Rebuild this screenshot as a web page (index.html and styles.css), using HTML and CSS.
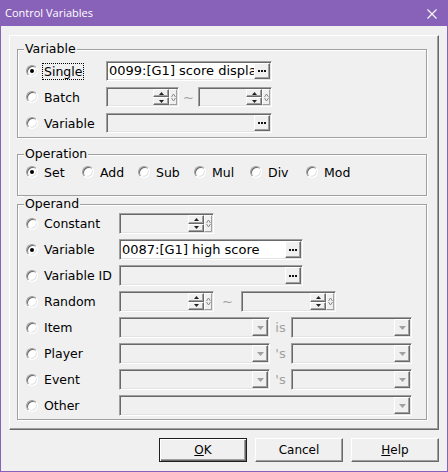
FILE: index.html
```html
<!DOCTYPE html>
<html>
<head>
<meta charset="utf-8">
<link rel="stylesheet" href="styles.css">
</head>
<body>
<div class="window">
  <div class="titlebar">
    <span class="title">Control Variables</span>
    <svg class="close" width="10" height="10" viewBox="0 0 10 10"><path d="M0.5 0.5L9.5 9.5M9.5 0.5L0.5 9.5" stroke="#fff" stroke-width="1.1" fill="none"/></svg>
  </div>
  <div class="client">
    <div class="panel">

      <div class="group g-var">
        <span class="legend">Variable</span>
        <div class="rows">
          <div class="row">
            <div class="lab"><span class="radio on"></span><span class="lt focus">Single</span></div>
            <div class="field on w166"><span class="txt">0099:[G1] score display</span><span class="raised ell"><svg width="8" height="2" viewBox="0 0 8 2"><rect x="0" y="0" width="2" height="2" fill="#111"/><rect x="3" y="0" width="2" height="2" fill="#111"/><rect x="6" y="0" width="2" height="2" fill="#111"/></svg></span></div>
          </div>
          <div class="row">
            <div class="lab"><span class="radio"></span><span class="lt">Batch</span></div>
            <div class="field spin w73"><span class="txt"></span><span class="spinbtns"><span class="raised sb"><svg width="5" height="3" viewBox="0 0 5 3"><path d="M2.5 0L5 3H0Z" fill="#222"/></svg></span><span class="raised sb"><svg width="5" height="3" viewBox="0 0 5 3"><path d="M0 0H5L2.5 3Z" fill="#222"/></svg></span></span><span class="raised knob"><svg width="5" height="9" viewBox="0 0 5 9"><path d="M0.5 4L2.5 1L4.5 4M0.5 5L2.5 8L4.5 5" stroke="#8a8a8a" fill="none"/></svg></span></div>
            <span class="sep w19">~</span>
            <div class="field spin w74"><span class="txt"></span><span class="spinbtns"><span class="raised sb"><svg width="5" height="3" viewBox="0 0 5 3"><path d="M2.5 0L5 3H0Z" fill="#222"/></svg></span><span class="raised sb"><svg width="5" height="3" viewBox="0 0 5 3"><path d="M0 0H5L2.5 3Z" fill="#222"/></svg></span></span><span class="raised knob"><svg width="5" height="9" viewBox="0 0 5 9"><path d="M0.5 4L2.5 1L4.5 4M0.5 5L2.5 8L4.5 5" stroke="#8a8a8a" fill="none"/></svg></span></div>
          </div>
          <div class="row">
            <div class="lab"><span class="radio"></span><span class="lt">Variable</span></div>
            <div class="field w166"><span class="txt"></span><span class="raised ell"><svg width="8" height="2" viewBox="0 0 8 2"><rect x="0" y="0" width="2" height="2" fill="#111"/><rect x="3" y="0" width="2" height="2" fill="#111"/><rect x="6" y="0" width="2" height="2" fill="#111"/></svg></span></div>
          </div>
        </div>
      </div>

      <div class="group g-op">
        <span class="legend">Operation</span>
        <div class="op-row">
          <div class="opt"><span class="radio on"></span><span class="lt">Set</span></div>
          <div class="opt"><span class="radio"></span><span class="lt">Add</span></div>
          <div class="opt"><span class="radio"></span><span class="lt">Sub</span></div>
          <div class="opt"><span class="radio"></span><span class="lt">Mul</span></div>
          <div class="opt"><span class="radio"></span><span class="lt">Div</span></div>
          <div class="opt"><span class="radio"></span><span class="lt">Mod</span></div>
        </div>
      </div>

      <div class="group g-opd">
        <span class="legend">Operand</span>
        <div class="rows">
          <div class="row">
            <div class="lab"><span class="radio"></span><span class="lt">Constant</span></div>
            <div class="field spin w95"><span class="txt"></span><span class="spinbtns"><span class="raised sb"><svg width="5" height="3" viewBox="0 0 5 3"><path d="M2.5 0L5 3H0Z" fill="#222"/></svg></span><span class="raised sb"><svg width="5" height="3" viewBox="0 0 5 3"><path d="M0 0H5L2.5 3Z" fill="#222"/></svg></span></span><span class="raised knob"><svg width="5" height="9" viewBox="0 0 5 9"><path d="M0.5 4L2.5 1L4.5 4M0.5 5L2.5 8L4.5 5" stroke="#8a8a8a" fill="none"/></svg></span></div>
          </div>
          <div class="row">
            <div class="lab"><span class="radio on"></span><span class="lt">Variable</span></div>
            <div class="field on w184"><span class="txt">0087:[G1] high score</span><span class="raised ell"><svg width="8" height="2" viewBox="0 0 8 2"><rect x="0" y="0" width="2" height="2" fill="#111"/><rect x="3" y="0" width="2" height="2" fill="#111"/><rect x="6" y="0" width="2" height="2" fill="#111"/></svg></span></div>
          </div>
          <div class="row">
            <div class="lab"><span class="radio"></span><span class="lt">Variable ID</span></div>
            <div class="field w184"><span class="txt"></span><span class="raised ell"><svg width="8" height="2" viewBox="0 0 8 2"><rect x="0" y="0" width="2" height="2" fill="#111"/><rect x="3" y="0" width="2" height="2" fill="#111"/><rect x="6" y="0" width="2" height="2" fill="#111"/></svg></span></div>
          </div>
          <div class="row">
            <div class="lab"><span class="radio"></span><span class="lt">Random</span></div>
            <div class="field spin w95"><span class="txt"></span><span class="spinbtns"><span class="raised sb"><svg width="5" height="3" viewBox="0 0 5 3"><path d="M2.5 0L5 3H0Z" fill="#222"/></svg></span><span class="raised sb"><svg width="5" height="3" viewBox="0 0 5 3"><path d="M0 0H5L2.5 3Z" fill="#222"/></svg></span></span><span class="raised knob"><svg width="5" height="9" viewBox="0 0 5 9"><path d="M0.5 4L2.5 1L4.5 4M0.5 5L2.5 8L4.5 5" stroke="#8a8a8a" fill="none"/></svg></span></div>
            <span class="sep w27">~</span>
            <div class="field spin w95"><span class="txt"></span><span class="spinbtns"><span class="raised sb"><svg width="5" height="3" viewBox="0 0 5 3"><path d="M2.5 0L5 3H0Z" fill="#222"/></svg></span><span class="raised sb"><svg width="5" height="3" viewBox="0 0 5 3"><path d="M0 0H5L2.5 3Z" fill="#222"/></svg></span></span><span class="raised knob"><svg width="5" height="9" viewBox="0 0 5 9"><path d="M0.5 4L2.5 1L4.5 4M0.5 5L2.5 8L4.5 5" stroke="#8a8a8a" fill="none"/></svg></span></div>
          </div>
          <div class="row">
            <div class="lab"><span class="radio"></span><span class="lt">Item</span></div>
            <div class="field w151"><span class="txt"></span><span class="raised drop"><svg width="7" height="4" viewBox="0 0 7 4"><path d="M0 0H7L3.5 4Z" fill="#a0a0a0"/></svg></span></div>
            <span class="sep w21">is</span>
            <div class="field w121"><span class="txt"></span><span class="raised drop"><svg width="7" height="4" viewBox="0 0 7 4"><path d="M0 0H7L3.5 4Z" fill="#a0a0a0"/></svg></span></div>
          </div>
          <div class="row">
            <div class="lab"><span class="radio"></span><span class="lt">Player</span></div>
            <div class="field w151"><span class="txt"></span><span class="raised drop"><svg width="7" height="4" viewBox="0 0 7 4"><path d="M0 0H7L3.5 4Z" fill="#a0a0a0"/></svg></span></div>
            <span class="sep w21">'s</span>
            <div class="field w121"><span class="txt"></span><span class="raised drop"><svg width="7" height="4" viewBox="0 0 7 4"><path d="M0 0H7L3.5 4Z" fill="#a0a0a0"/></svg></span></div>
          </div>
          <div class="row">
            <div class="lab"><span class="radio"></span><span class="lt">Event</span></div>
            <div class="field w151"><span class="txt"></span><span class="raised drop"><svg width="7" height="4" viewBox="0 0 7 4"><path d="M0 0H7L3.5 4Z" fill="#a0a0a0"/></svg></span></div>
            <span class="sep w21">'s</span>
            <div class="field w121"><span class="txt"></span><span class="raised drop"><svg width="7" height="4" viewBox="0 0 7 4"><path d="M0 0H7L3.5 4Z" fill="#a0a0a0"/></svg></span></div>
          </div>
          <div class="row">
            <div class="lab"><span class="radio"></span><span class="lt">Other</span></div>
            <div class="field w293"><span class="txt"></span><span class="raised drop"><svg width="7" height="4" viewBox="0 0 7 4"><path d="M0 0H7L3.5 4Z" fill="#a0a0a0"/></svg></span></div>
          </div>
        </div>
      </div>

    </div>
    <div class="buttons">
      <button class="btn def"><u>O</u>K</button>
      <button class="btn">Cancel</button>
      <button class="btn"><u>H</u>elp</button>
    </div>
  </div>
</div>
</body>
</html>
```
FILE: styles.css
```css
* { box-sizing: border-box; }
body {
  margin: 0;
  font-family: "DejaVu Sans", "Liberation Sans", sans-serif;
  font-size: 12.5px;
  color: #000;
}
.window {
  width: 448px;
  height: 472px;
  border: 1px solid #8862b8;
  border-top: 0;
  background: #f0f0f0;
}
.titlebar {
  height: 26px;
  background: #8862b8;
  display: flex;
  align-items: center;
  justify-content: space-between;
  padding: 0 10px 0 4px;
  color: #fff;
  font-family: "Open Sans", sans-serif;
  font-size: 11px;
}
.title { line-height: 26px; }
.close { display: block; margin-top: 1px; }
.client { padding: 9px 8px 0 8px; }
.panel {
  width: 430px;
  height: 395px;
  border: 1px solid;
  border-color: #fff #696969 #696969 #fff;
  box-shadow: inset -1px -1px 0 #a0a0a0;
  padding: 13px 0 0 7px;
}
.group {
  position: relative;
  width: 410px;
  border: 1px solid #a0a0a0;
  box-shadow: 1px 1px 0 #fff, inset 1px 1px 0 #fff;
}
.legend {
  position: absolute;
  top: -9px;
  left: 6px;
  padding: 0 1px;
  background: #f0f0f0;
  line-height: 15px;
}
.g-var { height: 89px; padding-top: 11px; }
.g-op { margin-top: 16px; height: 42px; padding-top: 9px; }
.g-opd { margin-top: 8px; height: 216px; padding-top: 8px; }
.rows {
  display: flex;
  flex-direction: column;
  gap: 6px;
  padding-left: 8px;
}
.g-opd .rows { gap: 5px; }
.row { display: flex; align-items: center; }
.lab { width: 80px; flex-shrink: 0; display: flex; align-items: center; }
.g-opd .lab { width: 93px; }
.radio {
  position: relative;
  width: 12px;
  height: 12px;
  flex-shrink: 0;
  border-radius: 50%;
  border: 1px solid;
  border-color: #a0a0a0 #fff #fff #a0a0a0;
  background: #fff;
  box-shadow: inset 1px 1px 0 #696969, inset -1px -1px 0 #e3e3e3;
  margin-right: 4px;
}
.radio.on::after {
  content: "";
  position: absolute;
  left: 3px;
  top: 3px;
  width: 4px;
  height: 4px;
  border-radius: 50%;
  background: #000;
}
.lt {
  border: 1px dotted transparent;
  padding: 0 1px;
  line-height: 15px;
  white-space: nowrap;
}
.lt.focus { border-color: #000; }
.op-row { display: flex; align-items: center; height: 16px; padding-left: 8px; }
.opt { width: 56px; display: flex; align-items: center; }

.field {
  display: flex;
  height: 20px;
  flex-shrink: 0;
  border: 1px solid;
  border-color: #a0a0a0 #fff #fff #a0a0a0;
  box-shadow: inset 1px 1px 0 #696969, inset -1px -1px 0 #e3e3e3;
  padding: 1px;
  background: #f0f0f0;
}
.g-opd .field { height: 21px; }
.field.on { background: #fff; }
.txt {
  flex: 1;
  min-width: 0;
  overflow: hidden;
  white-space: nowrap;
  font-size: 13px;
  line-height: 16px;
  padding-left: 1px;
  align-self: center;
}
.raised {
  background: #f0f0f0;
  border: 1px solid;
  border-color: #fff #696969 #696969 #fff;
  box-shadow: inset -1px -1px 0 #a0a0a0;
  display: flex;
  align-items: center;
  justify-content: center;
  flex-shrink: 0;
}
.raised svg { display: block; }
.ell { width: 16px; }
.drop { width: 16px; }
.spinbtns { width: 16px; display: flex; flex-direction: column; flex-shrink: 0; }
.sb { flex: 1; }
.knob { width: 8px; border-color: #fff #a0a0a0 #a0a0a0 #fff; box-shadow: none; }
.sep {
  flex-shrink: 0;
  text-align: center;
  color: #a0a0a0;
  font-size: 13px;
}
.w19 { width: 19px; }
.w21 { width: 21px; }
.w27 { width: 27px; }
.w73 { width: 73px; }
.w74 { width: 74px; }
.w95 { width: 95px; }
.w121 { width: 121px; }
.w151 { width: 151px; }
.w166 { width: 166px; }
.w184 { width: 184px; }
.w293 { width: 293px; }

.buttons {
  display: flex;
  justify-content: flex-end;
  gap: 8px;
  margin-top: 8px;
}
.btn {
  width: 88px;
  height: 24px;
  padding: 0;
  margin: 0;
  font-family: "DejaVu Sans", "Liberation Sans", sans-serif;
  font-size: 12px;
  color: #000;
  background: #f0f0f0;
  border: 1px solid;
  border-color: #fff #696969 #696969 #fff;
  box-shadow: inset -1px -1px 0 #a0a0a0;
}
.btn.def {
  border-color: #1e1e1e;
  box-shadow: inset 1px 1px 0 #fff, inset -1px -1px 0 #696969, inset -2px -2px 0 #a0a0a0;
}
```
